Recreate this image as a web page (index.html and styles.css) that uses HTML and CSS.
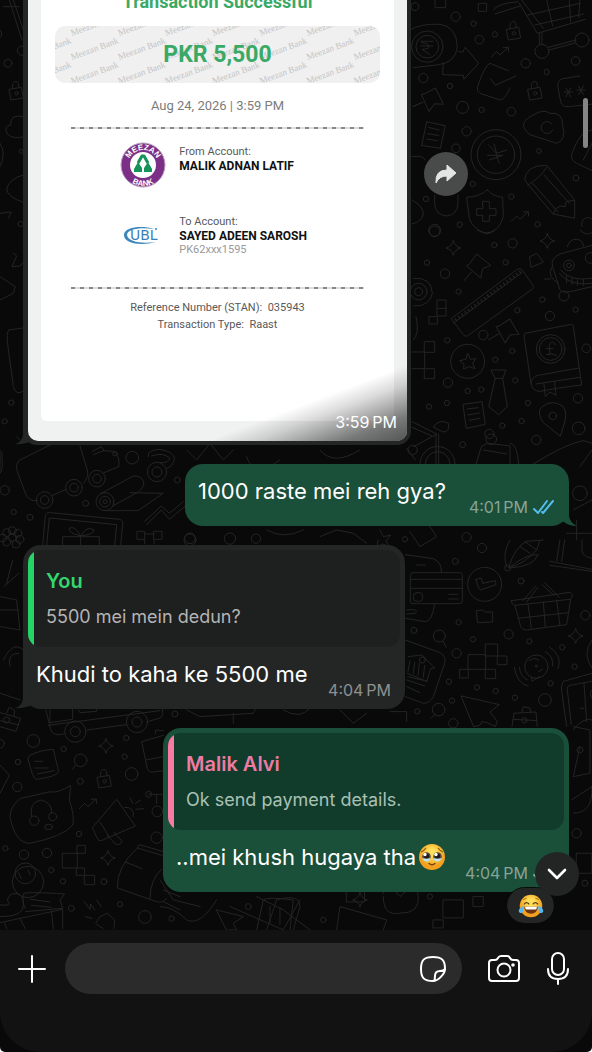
FILE: index.html
```
<!DOCTYPE html>
<html lang="en">
<head>
    <meta charset="UTF-8">
    <meta name="viewport" content="width=device-width, initial-scale=1.0">
    <title>Chat</title>
    <link rel="stylesheet" href="styles.css">
</head>
<body>
    <main class="chat">
        <svg class="wallpaper" viewBox="0 0 592 930" preserveAspectRatio="xMidYMin slice" aria-hidden="true">
            <defs>
                <path id="star" d="M0-22Q4-4 22 0Q4 4 0 22Q-4 4-22 0Q-4-4 0-22z"/>
                <g id="lock"><path d="M-20-8L16-14L22 18L-14 24zM-10-12Q-12-30 0-32Q10-30 8-14"/><circle r="5" cx="2" cy="4"/></g>
                <g id="note"><path d="M-30-30L26-38L36 30L-20 42zM-18-16L14-20M-16 2L18-4M-12 18L20 12"/></g>
                <path id="pin" d="M-24-10L-4-38L38-4L14 6L8 34L-34-2zM-20 16L-42 42"/>
                <path id="zig" d="M-26 14L-10-2L0 8L24-14M10-14L25-15L26-2"/>
                <path id="blocks" d="M-45-20h52v44h-52zM7-52h36v36h-36zM7 24h30v28h-30zM-70 24h25v26h-25zM43-16h28v26h-28z"/>
            </defs>
            <!-- right side, top -->
            <g transform="translate(400 0) scale(.3333)">
                <path d="M105-5v28h32v-28M236 10h24v24h-24zM280 30Q290 10 355 5M285 42L360 18M358 10L412 100L556 58M384 45L540 10M405 75L550 42M365 0L430 85M440 0L458 78M508 0L512 65M540 0L536 52M418 100V132M426 98V132M448 150L528 128M445 142L528 120"/>
                <circle cx="426" cy="154" r="21"/><circle cx="546" cy="120" r="21"/>
                <circle cx="82" cy="140" r="34"/><circle cx="82" cy="140" r="47"/>
                <path d="M30 90Q60 70 120 73Q170 80 172 140Q168 190 110 195L40 203M62 124h38M62 138h36M64 128Q95 130 84 146L66 148L90 164M130 188L128 224L190 226L192 238L236 190L196 142L188 156L176 155"/>
                <path d="M325 212L270 190Q255 194 232 262Q230 275 240 280L300 300Q314 300 330 264M272 236L286 256L348 228M540 228L488 236Q470 240 474 262L482 305Q486 322 506 320L580 312M492 276h26M498 264L512 290M512 264L498 290M530 270h26M536 258L550 284M550 258L536 284"/>
                <circle cx="288" cy="464" r="75"/><circle cx="288" cy="464" r="56"/>
                <path d="M265 434L290 460L282 432M290 460L320 450M262 466h46M268 480L308 466M288 462L298 490"/>
                <path d="M400 345Q430 325 450 340Q490 335 488 378Q500 420 470 430L390 404Q362 380 374 364Q382 352 400 345M456 372A18 18 0 1 0 458 390M576 390Q540 390 516 460Q510 480 530 490L576 512M576 430L550 480"/>
                <path d="M374 540Q376 495 440 496L524 600V655L460 642zM382 556Q420 535 440 502M398 550L474 636M432 525L508 610M460 642Q468 612 496 620Q490 600 524 602"/>
                <path d="M262 570Q280 590 308 592L310 650Q300 690 262 702Q220 690 208 655L200 592Q240 590 262 570zM248 604h20v22h20v20h-20v18h-20v-18h-18v-20h18z"/>
                <path d="M104 585V610Q105 645 140 648Q172 645 174 610V585M36 470Q70 465 76 480M36 600Q70 620 70 640Q68 665 36 672M546 680A20 20 0 0 1 580 660"/>
                <use href="#lock" x="340" y="96"/><use href="#lock" x="404" y="276"/><use href="#zig" x="300" y="157"/><use href="#zig" x="360" y="650"/>
                <use href="#pin" x="94" y="300" transform="rotate(25 94 300)"/><use href="#note" x="98" y="404" transform="rotate(20 98 404)"/>
                <circle cx="45" cy="20" r="12"/><circle cx="167" cy="50" r="14"/><circle cx="221" cy="71" r="8"/><circle cx="238" cy="119" r="13"/><circle cx="285" cy="103" r="8"/><circle cx="70" cy="234" r="14"/><circle cx="150" cy="258" r="8"/><circle cx="188" cy="322" r="18"/><circle cx="245" cy="330" r="8"/><circle cx="334" cy="335" r="13"/><circle cx="377" cy="190" r="14"/><circle cx="440" cy="216" r="8"/><circle cx="527" cy="183" r="13"/><circle cx="200" cy="394" r="14"/><circle cx="168" cy="445" r="13"/><circle cx="417" cy="453" r="7"/><circle cx="528" cy="534" r="9"/><circle cx="218" cy="552" r="8"/><circle cx="334" cy="590" r="8"/><circle cx="78" cy="597" r="8"/><circle cx="104" cy="691" r="18"/><circle cx="179" cy="674" r="8"/><circle cx="413" cy="673" r="8"/>
            </g>
            <!-- right side, middle -->
            <g transform="translate(400 230) scale(.3333)">
                <path d="M155 265L352 118Q360 112 367 120L400 168Q402 174 396 178L202 318Q195 322 188 312zM160 280L366 128"/>
                <path class="thick" stroke-dasharray="4 8" d="M166 270L362 124"/>
                <path d="M480 72L576 46M480 72Q450 85 458 110L480 180Q488 190 510 185L576 170M455 112Q440 140 475 160M432 147h20M502 50Q510 25 530 28Q550 30 550 48M482 120Q510 155 576 145M478 130Q510 170 576 160M500 138v20M516 145v18M532 148v18M550 148v18"/>
                <circle cx="507" cy="106" r="16"/><circle cx="507" cy="106" r="7"/><circle cx="572" cy="84" r="16"/><circle cx="492" cy="198" r="15"/>
                <circle cx="56" cy="185" r="12"/><circle cx="56" cy="185" r="25"/><path d="M40 145Q95 140 97 190Q90 230 40 228M40 330Q60 310 48 260"/>
                <path d="M112 210h26v48h-26zM88 260h24v22h-24zM112 235h26M74 335h30v32h-30zM74 416h30v30h-30zM36 366h38v50h-38"/>
                <circle cx="203" cy="394" r="51"/><path d="M203 370L211 388L227 386L218 400L225 416L206 410L191 417L192 402L179 392L197 388z"/>
                <path d="M375 310L515 283Q520 284 520 290L545 465Q470 474 420 484Q396 484 393 460L373 325Q371 312 375 310M393 460Q396 440 414 436L538 414M408 462L540 442M432 462L436 500L450 486L468 496L464 456"/>
                <circle cx="452" cy="357" r="43"/><circle cx="452" cy="357" r="34"/><path d="M466 344Q458 330 450 340Q446 350 450 374H440Q456 368 470 376M440 356h20"/>
                <path d="M274 420H318L308 445H286zM286 445L266 530L296 554L322 530L308 445"/>
                <path d="M480 618L430 578Q410 548 424 532Q456 505 490 530Q505 550 490 590z"/><circle cx="458" cy="558" r="11"/>
                <path d="M100 590Q120 565 145 580Q152 605 130 606zM36 575L110 612L42 650M36 592L96 618M108 612V702M116 612V702M60 702A50 50 0 0 1 165 702M76 702A36 36 0 0 1 150 702M20 655L46 690"/><circle cx="38" cy="660" r="14"/>
                <path d="M228 702L244 650L262 640L330 648L330 702M330 640Q352 640 356 702M250 660L320 672M400 702Q500 640 550 632L576 640"/><circle cx="274" cy="628" r="16"/><circle cx="268" cy="612" r="14"/>
                <path d="M390 80L410 70L430 96L394 112zM540 0Q560 20 576 8M232 0Q260 18 285 0"/>
                <use href="#pin" x="234" y="110"/><use href="#pin" x="320" y="304" transform="rotate(20 320 304)"/><use href="#star" x="160" y="54"/><use href="#star" x="442" y="33"/><use href="#note" x="220" y="553"/>
                <circle cx="104" cy="4" r="16"/><circle cx="283" cy="45" r="8"/><circle cx="338" cy="40" r="14"/><circle cx="81" cy="98" r="8"/><circle cx="317" cy="97" r="8"/><circle cx="135" cy="131" r="14"/><circle cx="176" cy="185" r="8"/><circle cx="427" cy="209" r="8"/><circle cx="352" cy="241" r="8"/><circle cx="450" cy="258" r="14"/><circle cx="527" cy="239" r="8"/><circle cx="250" cy="315" r="14"/><circle cx="142" cy="331" r="8"/><circle cx="337" cy="363" r="8"/><circle cx="286" cy="389" r="8"/><circle cx="559" cy="355" r="13"/><circle cx="144" cy="458" r="14"/><circle cx="203" cy="483" r="8"/><circle cx="244" cy="479" r="8"/><circle cx="346" cy="451" r="8"/><circle cx="384" cy="519" r="8"/><circle cx="534" cy="505" r="14"/><circle cx="87" cy="530" r="8"/><circle cx="141" cy="519" r="8"/><circle cx="365" cy="573" r="8"/><circle cx="307" cy="587" r="8"/><circle cx="536" cy="595" r="19"/><circle cx="409" cy="630" r="14"/><circle cx="188" cy="644" r="9"/>
            </g>
            <!-- right side, bottom -->
            <g transform="translate(400 540) scale(.3333)">
                <rect x="31" y="98" width="156" height="93" rx="8"/><path d="M31 118h156M31 145h156M146 163h28M146 177h28M50 75h26M16 44L100 56Q126 66 124 96M104 192Q96 245 76 245L16 235M20 210Q60 205 46 220L20 222"/><rect x="40" y="158" width="28" height="26" rx="10"/>
                <circle cx="254" cy="133" r="51"/><path d="M228 118L244 114L248 130L286 122L288 134L242 150Q236 150 228 118M230 212L248 210L255 216H278V246L234 248z"/>
                <path d="M320 80Q305 40 330 0M326 82Q345 20 380 4L430 0M326 84Q380 40 415 44Q400 80 330 84M326 82Q370 75 410 30L420 0M360 20L390 40M375 5L410 30M470 62L480 0M485 64L494 0M450 64L576 88M450 76L576 94M546 0V30Q546 50 576 55"/><circle cx="323" cy="84" r="9"/>
                <path d="M335 182L510 157Q525 168 510 178L345 196Q332 192 335 182M345 196L362 260Q366 270 380 270L500 254L512 178M384 192L394 264M430 186L436 262M470 180L480 256M354 235L506 218M368 182L408 138M380 186L414 142M426 134L462 166M434 128L478 172"/>
                <path d="M16 300L120 338Q140 350 134 370L100 470Q88 490 70 490L16 470M24 350L66 345L104 384L92 386L80 424L22 400M30 362L24 394M44 366L40 400M58 370L54 406M74 376L70 412M24 410L82 424M20 420L74 438M20 440L60 458"/><circle cx="67" cy="360" r="9"/>
                <path d="M184 468L298 494L270 516L292 545L286 560L262 548L246 545L240 556L222 560z"/>
                <circle cx="409" cy="380" r="35"/><path d="M394 412L396 424L418 410M448 320Q490 350 474 386M436 335Q462 350 458 378M343 382Q350 430 384 438M358 382Q362 412 382 420M388 362Q400 350 416 360M416 395L428 388"/><circle cx="409" cy="378" r="3"/>
                <path d="M576 400L490 424Q480 440 486 460L500 560M576 424L510 436Q500 438 502 450L514 554M552 430L560 545M576 450Q566 460 576 475M540 505h12M342 520L408 516L412 560M342 520L336 560M366 516L370 500L390 504L392 516M340 538L410 542M576 300Q545 340 576 385"/><circle cx="373" cy="541" r="8"/>
                <use href="#blocks" x="250" y="364"/><use href="#star" x="527" y="288"/>
                <path d="M130 304L138 322M106 522L94 534"/><circle cx="118" cy="288" r="18"/><circle cx="116" cy="509" r="19"/>
                <circle cx="246" cy="24" r="14"/><circle cx="166" cy="64" r="9"/><circle cx="363" cy="123" r="9"/><circle cx="556" cy="226" r="14"/><circle cx="176" cy="247" r="8"/><circle cx="42" cy="271" r="9"/><circle cx="219" cy="298" r="8"/><circle cx="326" cy="283" r="14"/><circle cx="388" cy="304" r="8"/><circle cx="487" cy="322" r="8"/><circle cx="170" cy="340" r="14"/><circle cx="524" cy="380" r="8"/><circle cx="147" cy="425" r="8"/><circle cx="231" cy="442" r="8"/><circle cx="287" cy="453" r="8"/><circle cx="345" cy="473" r="8"/><circle cx="435" cy="480" r="19"/><circle cx="452" cy="430" r="8"/><circle cx="52" cy="514" r="8"/><circle cx="156" cy="482" r="8"/><circle cx="160" cy="550" r="14"/>
            </g>
            <!-- left side, bottom -->
            <g transform="translate(0 700) scale(.3333)">
                <path d="M0 38L62 55L48 94L0 80M20 38L28 22L44 30L42 48M0 62L54 74M150 30V68L218 58V26M138 30L152 88Q156 104 176 104L190 102M262 90L378 74M440 66L480 54Q490 50 488 28M235 30L240 38L290 34V26M145 76L480 32"/><circle cx="20" cy="60" r="9"/>
                <circle cx="226" cy="95" r="32"/><circle cx="226" cy="95" r="15"/><circle cx="411" cy="66" r="32"/><circle cx="411" cy="66" r="15"/>
                <path d="M90 166Q120 150 160 148L176 215Q172 230 108 238Q98 236 84 176zM104 184h24M104 204h40M112 222L162 212M226 196L218 208M0 195L28 226L0 280M60 296Q30 320 30 350Q45 430 90 430Q190 410 218 375Q225 350 208 300L212 256Q175 280 150 276z"/>
                <path d="M95 350Q85 305 125 300Q160 312 154 340"/><circle cx="103" cy="362" r="14"/><circle cx="158" cy="350" r="12"/><ellipse cx="146" cy="381" rx="12" ry="8"/>
                <path d="M278 382L350 298L406 378L304 422Q295 425 290 412zM300 366L326 408M374 322Q404 320 400 350M390 294L398 310M406 310L422 300M408 328L430 326M322 406L346 432Q360 438 366 424L342 396"/>
                <path d="M188 460h44v44h-44zM232 436h24v24h-24zM230 504h24v22h-24zM254 526h30v28h-30z"/>
                <path d="M412 444L486 466M412 444L418 434L490 455M412 444Q350 500 352 564L470 605Q490 610 500 595M376 486L426 506M486 506Q450 540 450 595M490 570L540 590M490 605L540 630M425 125L490 106M425 125L442 206Q446 218 460 216L490 212M438 180L490 170M466 100L468 90L490 92M446 283h40M470 283V310"/><circle cx="446" cy="283" r="9"/><circle cx="472" cy="334" r="16"/>
                <circle cx="84" cy="546" r="47"/><circle cx="76" cy="520" r="31"/><path d="M56 518L64 536M84 510L90 525M72 580Q62 600 76 625M72 580Q90 575 194 582L180 600L188 625L76 635M92 598L150 606M94 616L154 622M0 615Q40 620 22 600Q28 575 56 582Q80 600 66 630Q55 650 0 650M0 668L188 628V686M60 656L76 686M154 632L160 686M14 670L20 686M252 604L270 628L272 612L284 630M290 600L304 620M288 668L300 650L322 640L344 660L342 686M256 650L276 655M310 686L288 672"/>
                <use href="#star" x="318" y="138"/><use href="#star" x="324" y="474"/><use href="#zig" x="264" y="312"/><use href="#lock" x="312" y="240"/>
                <circle cx="100" cy="123" r="19"/><circle cx="0" cy="131" r="13"/><circle cx="191" cy="147" r="8"/><circle cx="379" cy="114" r="8"/><circle cx="374" cy="170" r="8"/><circle cx="54" cy="186" r="8"/><circle cx="242" cy="181" r="19"/><circle cx="395" cy="222" r="19"/><circle cx="241" cy="244" r="9"/><circle cx="52" cy="261" r="14"/><circle cx="237" cy="402" r="8"/><circle cx="16" cy="445" r="8"/><circle cx="72" cy="464" r="14"/><circle cx="141" cy="459" r="14"/><circle cx="154" cy="510" r="8"/><circle cx="189" cy="544" r="8"/><circle cx="312" cy="545" r="9"/><circle cx="360" cy="613" r="8"/><circle cx="214" cy="625" r="9"/><circle cx="435" cy="651" r="19"/><circle cx="515" cy="656" r="8"/><circle cx="525" cy="42" r="9"/><circle cx="470" cy="413" r="17"/>
            </g>
            <!-- left side, middle -->
            <g transform="translate(0 430) scale(.3333)">
                <path d="M150 45L60 90Q45 100 52 125L78 195Q90 215 112 212M158 196L198 178M240 48L262 120Q268 140 250 160M276 65L304 50L312 62L280 74M312 62L340 64Q362 80 356 110L312 128M300 192L400 138Q430 135 432 165Q425 180 415 186L338 228M390 188L490 190L414 242H320M445 80Q440 60 480 58Q520 65 524 85Q520 110 500 115M455 78Q490 65 510 85Q505 100 480 98M434 274L484 228L508 250L550 215M440 284L484 240L508 268L560 225M128 345L136 258Q138 246 152 248L358 268Q370 270 368 282L362 345M140 345L148 264L350 284L344 345M188 345V320H298V345M242 320V345M242 318Q205 310 208 295Q225 285 242 318Q260 285 282 300Q285 312 242 318"/>
                <path d="M412 304h22v24h-22zM462 304h24v24h-24zM434 312h28M434 328v14M462 328v14M50 20L60 30M0 60V130Q10 120 6 90V65"/>
                <circle cx="134" cy="210" r="25"/><circle cx="134" cy="210" r="13"/><circle cx="222" cy="173" r="25"/><circle cx="222" cy="173" r="13"/><circle cx="291" cy="146" r="25"/><circle cx="291" cy="146" r="13"/><circle cx="315" cy="215" r="27"/><circle cx="315" cy="215" r="16"/><circle cx="315" cy="215" r="6"/><circle cx="471" cy="126" r="29"/><circle cx="471" cy="126" r="15"/>
                <circle cx="37" cy="322" r="12"/><circle cx="20" cy="308" r="12"/><circle cx="37" cy="302" r="12"/><circle cx="54" cy="310" r="12"/><circle cx="60" cy="328" r="12"/><circle cx="48" cy="342" r="12"/><circle cx="20" cy="336" r="12"/><circle cx="8" cy="324" r="12"/>
                <circle cx="397" cy="83" r="19"/><circle cx="345" cy="71" r="7"/><circle cx="532" cy="150" r="9"/><circle cx="14" cy="181" r="14"/><circle cx="41" cy="246" r="8"/><circle cx="90" cy="262" r="9"/><circle cx="257" cy="220" r="9"/><circle cx="570" cy="325" r="16"/>
            </g>
            <!-- left edge -->
            <g transform="scale(.3333)">
                <path d="M28 0L66 120M40 0L72 96M10 20H58M0 90Q12 104 0 112M0 430Q20 460 0 500M20 565Q30 535 70 525M20 565Q18 590 72 608M0 830L46 860L40 880L0 900M72 350Q30 340 32 375Q10 378 22 402Q40 420 72 410M40 760L50 768L36 800L60 798L70 788M0 640L34 636L26 654M26 990Q18 1000 24 1040L40 1160Q48 1190 72 1172M26 990L70 984"/>
                <use href="#lock" x="48" y="276"/>
                <circle cx="24" cy="190" r="12"/><circle cx="66" cy="152" r="14"/><circle cx="64" cy="454" r="6"/><circle cx="62" cy="672" r="8"/><circle cx="34" cy="1208" r="8"/><circle cx="14" cy="1264" r="8"/>
                <!-- along the rows between bubbles -->
                <path d="M20 1750L38 1680M12 1760L56 1720M0 1790L50 1800L60 1890L0 1880M0 1830h54M10 1980Q40 1920 70 1950M30 2000Q20 1960 56 1960M0 2080L60 2100"/>
                <path d="M560 1350L590 1380L630 1330L670 1380L700 1350M740 1370Q760 1440 840 1380M960 1350Q1000 1400 1080 1350M960 1610L1010 1590L1060 1600L1100 1630M1140 1590L1150 1610L1172 1606L1158 1622L1168 1640L1148 1632L1132 1640L1134 1620M1230 1595L1260 1640L1310 1610L1290 1580M800 1590Q850 1620 910 1590"/>
                <circle cx="570" cy="1620" r="18"/><circle cx="690" cy="1616" r="17"/><circle cx="768" cy="1616" r="14"/><circle cx="1215" cy="1618" r="8"/><circle cx="1400" cy="1612" r="14"/>
                <path d="M560 2130L600 2150L760 2140L770 2120M850 2130Q900 2160 930 2125M1020 2130L1060 2170L1100 2140M700 2140v30M1170 2135h50v30M690 2720L850 2790L900 2700M480 2640L520 2700L600 2720M770 2690L850 2730L930 2790M480 2720Q520 2720 560 2760Q600 2780 650 2700M800 2790L830 2700Q900 2680 900 2720L880 2790M1010 2790L1020 2720L1160 2760L1150 2790M1040 2650h54v56h-54z"/>
                <path d="M650 2730L730 2750L700 2770L710 2790L680 2790zM770 2790L790 2700Q800 2690 880 2700L870 2790M810 2720v50M840 2724v50M1330 2700h60v54h-60zM1300 2760h30v24h-30zM1420 2690h30v30h-30zM1150 2680Q1160 2640 1200 2690Q1250 2640 1255 2690Q1260 2740 1200 2740Q1150 2750 1150 2690"/>
                <use href="#star" x="1080" y="2700"/><circle cx="1290" cy="2690" r="8"/><circle cx="745" cy="2720" r="9"/><circle cx="970" cy="2760" r="8"/>
                <path d="M1720 2180L1770 2190V2320L1720 2330M1720 2330L1740 2240M1720 2440Q1780 2440 1776 2360M1730 2560h46v60h-46zM1715 2400L1776 2360M1720 2190Q1750 2150 1776 2160"/>
                <circle cx="1740" cy="2250" r="9"/><circle cx="1730" cy="2500" r="14"/><circle cx="1755" cy="2650" r="9"/><circle cx="1740" cy="1480" r="22"/>
                <path d="M1700 1600h76M1730 1560v60M1776 1500L1720 1530M1740 1400L1776 1350"/>
            </g>
        </svg>

        <article class="bubble incoming photo">
            <div class="receipt">
                <div class="receipt-card">
                    <h1>Transaction Successful</h1>
                    <div class="amount">
                        <svg viewBox="0 0 324 57" preserveAspectRatio="xMidYMid slice" aria-hidden="true">
                            <defs>
                                <text id="mark" transform="rotate(-20)">Meezan Bank</text>
                                <g id="row">
                                    <use href="#mark" x="-30"/><use href="#mark" x="17"/><use href="#mark" x="64"/><use href="#mark" x="111"/><use href="#mark" x="158"/><use href="#mark" x="205"/><use href="#mark" x="252"/><use href="#mark" x="299"/>
                                </g>
                            </defs>
                            <use href="#row" y="10"/><use href="#row" y="34"/><use href="#row" y="58"/>
                        </svg>
                        <strong>PKR 5,500</strong>
                    </div>
                    <p class="date">Aug 24, 2026 | 3:59 PM</p>
                    <div class="account">
                        <svg width="46" height="46" viewBox="0 0 46 46" aria-label="Meezan Bank">
                            <defs>
                                <path id="arc-top" d="M8 23A15 15 0 0 1 38 23"/>
                                <path id="arc-bottom" d="M2 23A21 21 0 0 0 44 23"/>
                            </defs>
                            <circle cx="23" cy="23" r="22" fill="#7b2f86" stroke="#b9a0c0"/>
                            <circle cx="23" cy="23" r="13" fill="#fff"/>
                            <g class="logo-text"><text><textPath href="#arc-top" startOffset="50%">MEEZAN</textPath></text><text><textPath href="#arc-bottom" startOffset="50%">BANK</textPath></text></g>
                            <path fill="none" stroke="#16935a" stroke-width="3" stroke-linejoin="round" d="M18 21L22 14H24L28 21"/>
                            <path fill="#16935a" d="M18 20L22 26V30H14V27zM28 20L24 26V30H32V27z"/>
                        </svg>
                        <div>
                            <span>From Account:</span>
                            <b>MALIK ADNAN LATIF</b>
                        </div>
                    </div>
                    <div class="account">
                        <svg width="46" height="24" viewBox="0 0 46 24" aria-label="UBL">
                            <path d="M34 5C22 1 4 3 4 11C4 20 22 22 36 18C22 20 8 18 7 11C7 5 20 3 34 5z" fill="#3a86bd"/>
                            <text class="ubl" x="10" y="16">UBL</text>
                            <circle cx="36" cy="5" r="1" fill="#3a86bd"/>
                        </svg>
                        <div>
                            <span>To Account:</span>
                            <b>SAYED ADEEN SAROSH</b>
                            <small>PK62xxx1595</small>
                        </div>
                    </div>
                    <p class="detail">Reference Number (STAN):&nbsp; 035943</p>
                    <p class="detail">Transaction Type:&nbsp; Raast</p>
                </div>
                <div class="shade"></div>
                <time>3:59&#8239;PM</time>
            </div>
            <button class="forward" aria-label="Forward">
                <svg width="24" height="22" viewBox="0 0 24 22"><path fill="#e4e4e4" stroke="#e4e4e4" stroke-linejoin="round" d="M13 2L22 10L13 18V13Q5 13 2 20Q1 7 13 7z"/></svg>
            </button>
        </article>

        <article class="bubble outgoing">
            <div class="line">
                <p>1000 raste mei reh gya?</p>
                <time>4:01&#8239;PM</time>
                <svg class="ticks" width="22" height="16" viewBox="0 0 22 16" aria-label="Read"><path d="M1 10L5 14L14 2M9 13L10 14L20 2"/></svg>
            </div>
        </article>

        <article class="bubble incoming">
            <blockquote class="green">
                <cite>You</cite>
                <p>5500 mei mein dedun?</p>
            </blockquote>
            <div class="line">
                <p>Khudi to kaha ke 5500 me</p>
                <time>4:04&#8239;PM</time>
            </div>
        </article>

        <article class="bubble outgoing wide">
            <blockquote class="pink">
                <cite>Malik Alvi</cite>
                <p>Ok send payment details.</p>
            </blockquote>
            <div class="line">
                <p>..mei khush hugaya tha<svg class="emoji" width="30" height="30" viewBox="0 0 30 30" role="img" aria-label="Face holding back tears">
                    <defs><radialGradient id="face" cy=".35"><stop offset=".3" stop-color="#ffe05a"/><stop offset="1" stop-color="#f3a01f"/></radialGradient></defs>
                    <circle cx="15" cy="15" r="13" fill="url(#face)"/>
                    <path d="M4 10Q7 9 9 6M21 6Q23 9 26 10" stroke="#8a5a12" stroke-width="1.2" fill="none"/>
                    <circle cx="9.5" cy="14.5" r="4.3" fill="#5b4a3c"/><circle cx="20.5" cy="14.5" r="4.3" fill="#5b4a3c"/>
                    <circle cx="9.5" cy="14" r="2.6" fill="#201a18"/><circle cx="20.5" cy="14" r="2.6" fill="#201a18"/>
                    <path d="M5.5 16Q9.5 17.500 13.500 16Q12.500 19.500 9.500 19.500Q6.500 19.500 5.500 16M16.500 16Q20.500 17.500 24.500 16Q23.500 19.500 20.500 19.500Q17.500 19.500 16.500 16" fill="#b9e6fa"/>
                    <circle cx="8" cy="12.500" r="1.700" fill="#fff"/><circle cx="19" cy="12.500" r="1.700" fill="#fff"/>
                    <path d="M12 21.500Q15 24 18 21.500" stroke="#7a3d0c" stroke-width="1.3" fill="none" stroke-linecap="round"/>
                </svg></p>
                <time>4:04&#8239;PM</time>
                <svg class="ticks pending" width="22" height="16" viewBox="0 0 22 16" aria-label="Delivered"><path d="M1 10L5 14L14 2M9 13L10 14L20 2"/></svg>
            </div>
            <button class="reaction" aria-label="Reaction">
                <svg width="26" height="26" viewBox="0 0 30 30">
                    <circle cx="15" cy="15" r="13" fill="url(#face)"/>
                    <path d="M6 8Q8 6 10 6M20 6Q22 6 24 8" stroke="#b17a1c" stroke-width="1.2" fill="none"/>
                    <path d="M7 13Q10 9 13 13M17 13Q20 9 23 13" stroke="#5b3a10" stroke-width="1.5" fill="none"/>
                    <path d="M7 16H23Q22 24 15 24Q8 24 7 16z" fill="#6b3514"/><path d="M8 16H22L21 19H9z" fill="#fff"/>
                    <path d="M7 15Q0 17 1 22Q4 25 6 21zM23 15Q30 17 29 22Q26 25 24 21z" fill="#56b8f0"/>
                </svg>
            </button>
            <button class="jump" aria-label="Scroll to latest">
                <svg width="20" height="14" viewBox="0 0 20 14"><path d="M2 3L10 11L18 3" fill="none" stroke="#fff" stroke-width="2.6" stroke-linecap="round" stroke-linejoin="round"/></svg>
            </button>
        </article>
        <div class="scrollbar"></div>
    </main>

    <footer>
        <form class="composer">
            <button type="button" aria-label="Attach">
                <svg width="28" height="28" viewBox="0 0 28 28"><path d="M14 1V27M1 14H27"/></svg>
            </button>
            <div class="field">
                <input type="text" aria-label="Message">
                <button type="button" aria-label="Stickers">
                    <svg width="28" height="28" viewBox="0 0 28 28"><path d="M14 26C5 26 2 23 2 14C2 5 5 2 14 2C23 2 26 5 26 14C26 19 19 26 14 26zM15 26Q16 24 16 21Q16 16 21 16Q25 16 26 14"/></svg>
                </button>
            </div>
            <div class="tools">
                <button type="button" aria-label="Camera">
                    <svg width="34" height="30" viewBox="0 0 34 30"><path d="M5 6H8Q10 6 11 4Q12 2 14 2H20Q22 2 23 4Q24 6 26 6H29Q32 6 32 9V24Q32 27 29 27H5Q2 27 2 24V9Q2 6 5 6z"/><circle cx="17" cy="16" r="6.5"/><circle class="dot" cx="26" cy="11" r="1.8"/></svg>
                </button>
                <button type="button" aria-label="Voice message">
                    <svg width="22" height="34" viewBox="0 0 22 34"><rect x="5" y="1" width="12" height="22" rx="6"/><path d="M1 17Q1 27 11 27Q21 27 21 17M11 27V32"/></svg>
                </button>
            </div>
        </form>
    </footer>
</body>
</html>
```
FILE: styles.css
```
* { box-sizing: border-box; }
html { background: #fff; }
body { margin: 0; height: 100vh; display: flex; flex-direction: column; overflow: hidden; border-radius: 0 0 5px 5px; background: #090909; color: #fff; font-family: Inter, "Liberation Sans", sans-serif; }
button { padding: 0; border: none; background: none; cursor: pointer; display: flex; align-items: center; justify-content: center; }
p, h1, blockquote { margin: 0; }
svg { display: block; }

/* chat */
.chat { position: relative; flex: 1; min-height: 0; overflow: hidden; display: flex; flex-direction: column; justify-content: flex-end; align-items: flex-start; gap: 19px; padding: 0 23px 38px; }
.wallpaper { position: absolute; inset: 0; width: 100%; height: 100%; fill: none; stroke: #242424; stroke-width: 3; stroke-linejoin: round; stroke-linecap: round; }
.wallpaper .thick { stroke-width: 9; stroke-linecap: butt; }
.scrollbar { position: absolute; top: 98px; right: 4px; width: 5px; height: 50px; border-radius: 3px; background: #858585; }

.bubble { position: relative; flex: none; border-radius: 18px; }
.bubble::after { content: ""; position: absolute; bottom: 0; width: 22px; height: 20px; background: inherit; }
.incoming { background: #242626; width: 70%; max-width: 382px; padding: 5px; }
.incoming::after { left: -8px; clip-path: path("M8 0V10Q7 17 0 19Q10 20 22 14V0z"); }
.outgoing { background: #1a4f3a; align-self: flex-end; width: 384px; max-width: 90%; padding: 5px; }
.outgoing::after { right: -8px; clip-path: path("M14 0V10Q15 17 22 20Q14 20 9 16L0 14V0z"); }
.outgoing.wide { width: 406px; }
.outgoing.wide::after { display: none; }

blockquote { position: relative; height: 97px; border-radius: 13px; overflow: hidden; padding: 18px; }
blockquote::before { content: ""; position: absolute; left: 0; top: 0; bottom: 0; width: 6px; background: currentColor; }
blockquote cite { display: block; font-style: normal; font-weight: 600; font-size: 20px; line-height: 26px; }
blockquote p { margin-top: 10px; font-size: 18px; line-height: 26px; }
.green { background: #1e1f1f; color: #25d366; }
.green cite { color: #34d56e; }
.green p { color: #b4b4b4; }
.pink { background: #113c2b; color: #f97ba5; }
.pink cite { color: #ee7ba3; }
.pink p { color: #a9c1b5; }

.line { display: flex; align-items: flex-end; height: 57px; padding: 0 9px 4px 8px; }
.line p { flex: 1; display: flex; align-items: center; font-size: 22px; line-height: 30px; padding-bottom: 11px; white-space: nowrap; }
.line time { font-size: 16px; line-height: 20px; color: #8f9191; }
.outgoing .line time { color: #88a497; }
.outgoing .line { height: 52px; }
.outgoing.wide .line { height: 57px; }
.ticks { margin: 0 0 2px 5px; fill: none; stroke: #53bdeb; stroke-width: 2; stroke-linecap: round; stroke-linejoin: round; }
.ticks.pending { stroke: #88a497; }
.emoji { margin-left: 1px; }

.reaction { position: absolute; right: 15px; bottom: -31px; width: 47px; height: 35px; border-radius: 18px; background: #242626; outline: 1px solid #0a0a0a; }
.jump { position: absolute; right: -10px; bottom: -4px; width: 44px; height: 44px; border-radius: 50%; background: #232525; }
.forward { position: absolute; left: calc(100% + 13px); bottom: 249px; width: 44px; height: 44px; border-radius: 50%; background: #494b4b; }

/* receipt */
.photo { width: 72%; max-width: 388px; padding: 4px 4px 4px 5px; border-radius: 14px; }
.receipt { position: relative; z-index: 1; overflow: hidden; border-radius: 10px; background: #f0f1f1; padding: 0 13px 20px; font-family: Roboto, sans-serif; color: #58595a; }
.receipt-card { background: #fff; border-radius: 0 0 6px 6px; padding: 20px 14px 88px; display: flex; flex-direction: column; align-items: center; }
.receipt h1 { font-size: 18px; line-height: 24px; font-weight: 700; color: #3aa966; }
.amount { position: relative; width: 100%; height: 57px; margin-top: 12px; border-radius: 10px; overflow: hidden; background: #f0f0f0; display: flex; align-items: center; justify-content: center; }
.amount svg { position: absolute; inset: 0; width: 100%; height: 100%; fill: #c4c4c4; font: 9px "Liberation Serif", serif; }
.amount strong { position: relative; font-size: 23px; line-height: 28px; color: #3aa966; }
.date { margin: 15px 0 13px; font-size: 13px; line-height: 16px; color: #7c7c7c; }
.account { width: 90%; height: 70px; display: flex; gap: 13px; padding-left: 49px; align-items: flex-start; }
.account svg { margin-top: 15px; flex: none; }
.account div { display: flex; flex-direction: column; padding-top: 18px; font-size: 11px; line-height: 14px; }
.account b { font-size: 12px; color: #111; }
.account small { font-size: 11px; color: #999; }
.date + .account, .account + .detail { position: relative; }
.date + .account::before, .account + .detail::before { content: ""; display: block; position: absolute; left: 0; top: 0; width: 100%; height: 2px; background: repeating-linear-gradient(90deg, #888 0 4px, #ddd 4px 9px); }
.account + .account { height: 90px; }
.account + .account svg { margin-top: 27px; }
.account + .detail { width: 90%; padding-top: 12px; text-align: center; }
.detail { font-size: 11px; line-height: 17px; }
.logo-text { font: 700 8px "Liberation Sans", sans-serif; fill: #fff; text-anchor: middle; }
.ubl { font: 14px "DejaVu Sans", sans-serif; fill: #397fb8; }
.shade { position: absolute; right: 0; bottom: 0; width: 200px; height: 76px; background: linear-gradient(to top left, rgba(0, 0, 0, .65), rgba(0, 0, 0, .5) 16%, rgba(0, 0, 0, .14) 38%, rgba(0, 0, 0, 0) 50%); }
.receipt time { position: absolute; right: 10px; bottom: 9px; font-family: Inter, sans-serif; font-size: 16px; line-height: 20px; color: #fff; }

/* composer */
footer { flex: none; background: #121212; border-radius: 0 0 40px 40px; }
.composer { display: flex; align-items: center; gap: 19px; padding: 13px 23px 58px 18px; }
.composer svg { fill: none; stroke: #fff; stroke-width: 2; stroke-linecap: round; stroke-linejoin: round; }
.composer .dot { fill: #fff; stroke: none; }
.field { flex: 1; min-width: 0; height: 51px; display: flex; align-items: center; padding: 0 15px 0 20px; border-radius: 26px; background: #2b2b2b; }
.field input { flex: 1; min-width: 0; border: none; outline: none; background: none; color: #fff; font: 20px Inter, sans-serif; }
.tools { display: flex; align-items: center; gap: 26px; padding-left: 6px; }
```
